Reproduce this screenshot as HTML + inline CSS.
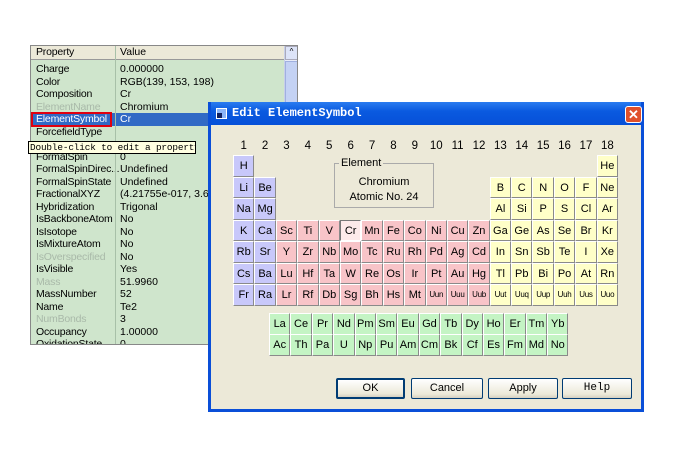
<!DOCTYPE html>
<html><head><meta charset="utf-8"><style>
*{margin:0;padding:0;box-sizing:border-box}
body{width:687px;height:453px;background:#fff;position:relative;overflow:hidden;font-family:"Liberation Sans",sans-serif;font-size:11px;color:#000}
.abs{position:absolute}
#panel{left:30px;top:45px;width:268px;height:300px;background:#cfe5cc;border:1px solid #888;overflow:hidden}
.row{position:absolute;left:0;width:253px;height:12.5px;line-height:12.5px;font-size:10.5px;white-space:nowrap}
.row span{position:absolute;left:5px;letter-spacing:-.2px}
.row b{font-weight:normal;position:absolute;left:89px}
.hdr{top:0;height:14px;background:#ece9d8;border-bottom:1px solid #999}
.dim span{color:#a9b9a9}
#sb{left:253px;top:0;width:14px;height:300px;background:#e8ecf8;border-left:1px solid #c8d0e8}
#dlg{left:208px;top:102px;width:436px;height:310px;background:#ece9d8;border:3px solid #0a4fd8;border-top:none}
#title{left:0;top:0;width:430px;height:23px;background:linear-gradient(#2a7cf0,#0a5ae0 40%,#0650d8);color:#fff;font-family:"Liberation Mono",monospace;font-weight:bold;font-size:12px;line-height:23px;padding-left:21px}
.cell{height:21.5px;line-height:20px;text-align:center;font-size:11px;border:1px solid;border-color:#fff #8a8a8a #8a8a8a #fff}
.B{background:#c8c8fa}.P{background:#f8c4c8}.Y{background:#ffffc8}.G{background:#c4f4c4}
.s{font-size:8px;letter-spacing:-.3px}
#grid{left:22px;top:53px;display:grid;grid-template-columns:repeat(18,21.4px);grid-auto-rows:21.5px}
#lan{left:58px;top:211px;display:grid;grid-template-columns:repeat(14,21.4px);grid-auto-rows:21.4px}
.btn{position:absolute;top:276px;height:21px;border:1px solid #003c74;border-radius:2px;background:linear-gradient(#fff,#ece9d8 80%,#d6d0c0);text-align:center;line-height:19px;font-size:11px}
</style></head><body>
<div id="panel" class="abs">
<div class="row hdr"><span>Property</span><b>Value</b></div>
<div class="row" style="top:17px"><span>Charge</span><b>0.000000</b></div>
<div class="row" style="top:29.5px"><span>Color</span><b>RGB(139, 153, 198)</b></div>
<div class="row" style="top:42px"><span>Composition</span><b>Cr</b></div>
<div class="row dim" style="top:54.5px"><span>ElementName</span><b>Chromium</b></div>
<div class="row" style="top:67px;background:#316ac5;color:#fff"><span>ElementSymbol</span><b>Cr</b></div>
<div class="abs" style="left:0;top:66px;width:81px;height:15px;border:2px solid #e00010"></div>
<div class="row" style="top:79.5px"><span>ForcefieldType</span><b></b></div>
<div class="row" style="top:104.5px"><span>FormalSpin</span><b>0</b></div>
<div class="row" style="top:117px"><span>FormalSpinDirec...</span><b>Undefined</b></div>
<div class="row" style="top:129.5px"><span>FormalSpinState</span><b>Undefined</b></div>
<div class="row" style="top:142px"><span>FractionalXYZ</span><b>(4.21755e-017, 3.60</b></div>
<div class="row" style="top:154.5px"><span>Hybridization</span><b>Trigonal</b></div>
<div class="row" style="top:167px"><span>IsBackboneAtom</span><b>No</b></div>
<div class="row" style="top:179.5px"><span>IsIsotope</span><b>No</b></div>
<div class="row" style="top:192px"><span>IsMixtureAtom</span><b>No</b></div>
<div class="row dim" style="top:204.5px"><span>IsOverspecified</span><b>No</b></div>
<div class="row" style="top:217px"><span>IsVisible</span><b>Yes</b></div>
<div class="row dim" style="top:229.5px"><span>Mass</span><b>51.9960</b></div>
<div class="row" style="top:242px"><span>MassNumber</span><b>52</b></div>
<div class="row" style="top:254.5px"><span>Name</span><b>Te2</b></div>
<div class="row dim" style="top:267px"><span>NumBonds</span><b>3</b></div>
<div class="row" style="top:279.5px"><span>Occupancy</span><b>1.00000</b></div>
<div class="row" style="top:292px"><span>OxidationState</span><b>0</b></div>
<div class="abs" style="left:84px;top:0;width:1px;height:300px;background:#a8c0a8"></div>
<div id="sb" class="abs"><div class="abs" style="left:0;top:0;width:13px;height:14px;background:#dde4f8;border:1px solid #aab;font-size:8px;text-align:center">^</div><div class="abs" style="left:0;top:15px;width:13px;height:60px;background:#c4d2f4;border:1px solid #a0b0e0"></div></div>
</div>
<div class="abs" style="left:28px;top:141px;width:168px;height:13px;background:#ffffe1;border:1px solid #000;font-family:'Liberation Mono',monospace;font-size:9.4px;line-height:11px;padding-left:1px;white-space:nowrap;overflow:hidden;letter-spacing:-.15px">Double-click to edit a property</div>

<div id="dlg" class="abs">
<div id="title" class="abs">Edit ElementSymbol</div>
<div class="abs" style="left:5px;top:6px;width:11px;height:11px;border:1px solid #fff;background:#8ab4f8"><div class="abs" style="left:0;top:4px;width:5px;height:5px;background:#102060"></div></div>
<div class="abs" style="left:414px;top:4px;width:17px;height:17px;background:#e0502a;border:1px solid #fff;border-radius:3px;color:#fff;font-weight:bold;text-align:center;line-height:15px;font-size:13px">✕</div>
<div class="abs" style="left:22px;top:38px;display:grid;grid-template-columns:repeat(18,21.4px);text-align:center;font-size:11.5px">
<div>1</div><div>2</div><div>3</div><div>4</div><div>5</div><div>6</div><div>7</div><div>8</div><div>9</div><div>10</div><div>11</div><div>12</div><div>13</div><div>14</div><div>15</div><div>16</div><div>17</div><div>18</div></div>
<div class="abs" style="left:123px;top:61px;width:100px;height:45px;border:1px solid #aaa;text-align:center;line-height:15px;padding-top:11px">Chromium<br>Atomic No. 24</div>
<div class="abs" style="left:128px;top:54px;background:#ece9d8;padding:0 2px;line-height:14px">Element</div>
<div id="grid" class="abs">
<div class="cell B">H</div><div class="cell Y" style="grid-column:18">He</div>
<div class="cell B">Li</div><div class="cell B">Be</div><div class="cell Y" style="grid-column:13">B</div><div class="cell Y">C</div><div class="cell Y">N</div><div class="cell Y">O</div><div class="cell Y">F</div><div class="cell Y">Ne</div>
<div class="cell B">Na</div><div class="cell B">Mg</div><div class="cell Y" style="grid-column:13">Al</div><div class="cell Y">Si</div><div class="cell Y">P</div><div class="cell Y">S</div><div class="cell Y">Cl</div><div class="cell Y">Ar</div>
<div class="cell B">K</div><div class="cell B">Ca</div><div class="cell P">Sc</div><div class="cell P">Ti</div><div class="cell P">V</div><div class="cell" style="background:#fdeaea;border-color:#777 #fff #fff #777">Cr</div><div class="cell P">Mn</div><div class="cell P">Fe</div><div class="cell P">Co</div><div class="cell P">Ni</div><div class="cell P">Cu</div><div class="cell P">Zn</div><div class="cell Y">Ga</div><div class="cell Y">Ge</div><div class="cell Y">As</div><div class="cell Y">Se</div><div class="cell Y">Br</div><div class="cell Y">Kr</div>
<div class="cell B">Rb</div><div class="cell B">Sr</div><div class="cell P">Y</div><div class="cell P">Zr</div><div class="cell P">Nb</div><div class="cell P">Mo</div><div class="cell P">Tc</div><div class="cell P">Ru</div><div class="cell P">Rh</div><div class="cell P">Pd</div><div class="cell P">Ag</div><div class="cell P">Cd</div><div class="cell Y">In</div><div class="cell Y">Sn</div><div class="cell Y">Sb</div><div class="cell Y">Te</div><div class="cell Y">I</div><div class="cell Y">Xe</div>
<div class="cell B">Cs</div><div class="cell B">Ba</div><div class="cell P">Lu</div><div class="cell P">Hf</div><div class="cell P">Ta</div><div class="cell P">W</div><div class="cell P">Re</div><div class="cell P">Os</div><div class="cell P">Ir</div><div class="cell P">Pt</div><div class="cell P">Au</div><div class="cell P">Hg</div><div class="cell Y">Tl</div><div class="cell Y">Pb</div><div class="cell Y">Bi</div><div class="cell Y">Po</div><div class="cell Y">At</div><div class="cell Y">Rn</div>
<div class="cell B">Fr</div><div class="cell B">Ra</div><div class="cell P">Lr</div><div class="cell P">Rf</div><div class="cell P">Db</div><div class="cell P">Sg</div><div class="cell P">Bh</div><div class="cell P">Hs</div><div class="cell P">Mt</div><div class="cell P s">Uun</div><div class="cell P s">Uuu</div><div class="cell P s">Uub</div><div class="cell Y s">Uut</div><div class="cell Y s">Uuq</div><div class="cell Y s">Uup</div><div class="cell Y s">Uuh</div><div class="cell Y s">Uus</div><div class="cell Y s">Uuo</div>
</div>
<div id="lan" class="abs">
<div class="cell G">La</div><div class="cell G">Ce</div><div class="cell G">Pr</div><div class="cell G">Nd</div><div class="cell G">Pm</div><div class="cell G">Sm</div><div class="cell G">Eu</div><div class="cell G">Gd</div><div class="cell G">Tb</div><div class="cell G">Dy</div><div class="cell G">Ho</div><div class="cell G">Er</div><div class="cell G">Tm</div><div class="cell G">Yb</div>
<div class="cell G">Ac</div><div class="cell G">Th</div><div class="cell G">Pa</div><div class="cell G">U</div><div class="cell G">Np</div><div class="cell G">Pu</div><div class="cell G">Am</div><div class="cell G">Cm</div><div class="cell G">Bk</div><div class="cell G">Cf</div><div class="cell G">Es</div><div class="cell G">Fm</div><div class="cell G">Md</div><div class="cell G">No</div>
</div>
<div class="btn" style="left:125px;width:69px;border-width:2px;line-height:17px">OK</div>
<div class="btn" style="left:200px;width:72px">Cancel</div>
<div class="btn" style="left:277px;width:70px">Apply</div>
<div class="btn" style="left:351px;width:70px;font-family:'Liberation Mono',monospace">Help</div>
</div>
</body></html>
